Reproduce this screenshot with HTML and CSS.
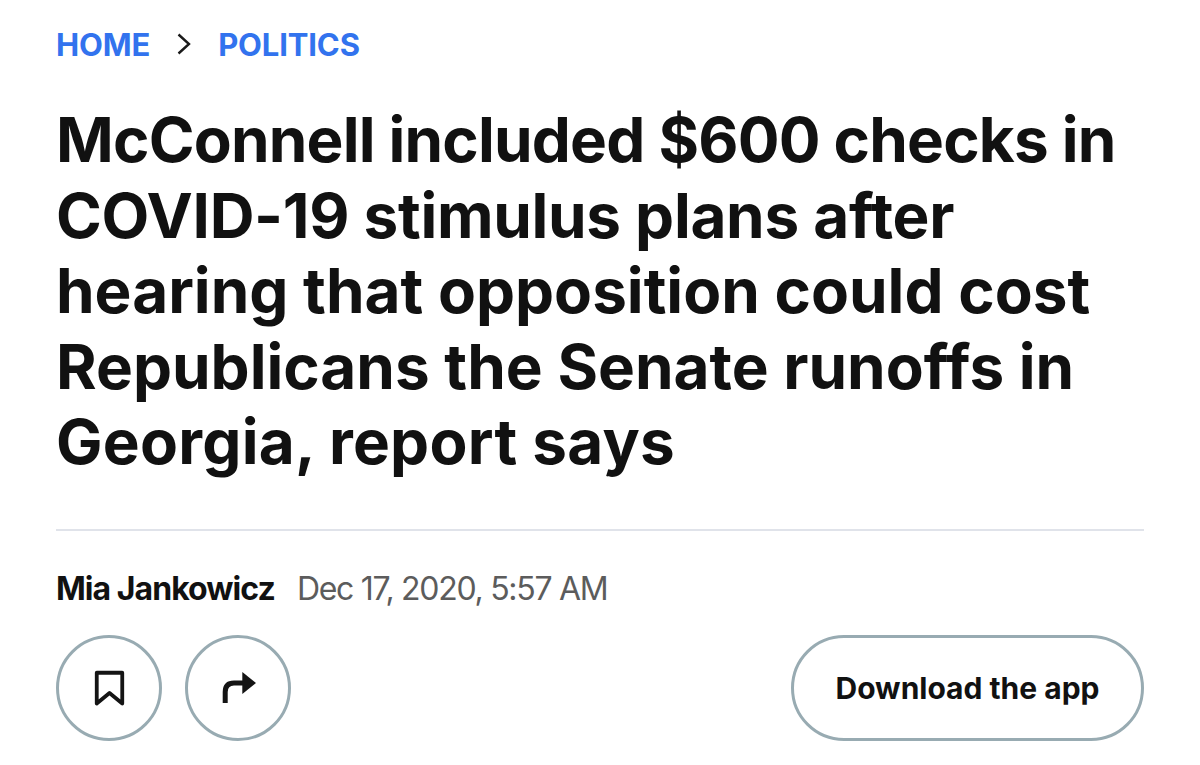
FILE: index.html
```html
<!DOCTYPE html>
<html lang="en">
<head>
<meta charset="utf-8">
<title>Article header</title>
<link rel="stylesheet" href="styles.css">
</head>
<body>
<main class="page">
  <nav class="crumbs">
    <a class="crumb">HOME</a>
    <svg class="chev" viewBox="0 0 14 22" width="14" height="22"><path d="M1.5 1.5 L12 11 L1.5 20.5" fill="none" stroke="#1a1a1a" stroke-width="2.4"/></svg>
    <a class="crumb">POLITICS</a>
  </nav>
  <h1 class="title"><span class="line tight">McConnell included $600 checks in</span> <span class="line snug">COVID-19 stimulus plans after</span> <span class="line">hearing that opposition could cost</span> <span class="line">Republicans the Senate runoffs in</span> <span class="line loose">Georgia, report says</span></h1>
  <hr class="rule">
  <div class="byline"><span class="author">Mia Jankowicz</span><span class="date">Dec 17, 2020, 5:57 AM</span></div>
  <div class="actions">
    <button class="circle"><svg viewBox="0 0 40 40" width="40" height="40"><path d="M7.75 4.75 H33.25 V35.5 L20.5 25 L7.75 35.5 Z" fill="none" stroke="#141414" stroke-width="3.8" stroke-linejoin="round"/></svg></button>
    <button class="circle"><svg viewBox="0 0 40 40" width="40" height="40"><path d="M7.2 35 V24 Q7.2 15 16 15 H26" fill="none" stroke="#141414" stroke-width="5"/><path d="M24.3 4 L38 15 L24.3 26 Z" fill="#141414"/></svg></button>
    <button class="app">Download the app</button>
  </div>
</main>
</body>
</html>
```
FILE: styles.css
```css
html, body { margin: 0; background: #fff; }
body { font-family: Inter, "Liberation Sans", sans-serif; color: #111; }
.page { width: 1088px; height: 765px; box-sizing: border-box; margin-left: 56px; padding-top: 25px; display: flex; flex-direction: column; }
.crumbs { display: flex; align-items: center; gap: 27px; height: 38px; }
.crumb { color: #3273ee; font-size: 31px; font-weight: 700; letter-spacing: -0.15px; }
.title { margin: 39px 0 0; font-size: 62px; line-height: 75.5px; font-weight: 700; width: 1088px; }
.line { display: block; white-space: nowrap; }
.tight { letter-spacing: -0.8px; }
.snug { letter-spacing: -0.3px; }
.loose { letter-spacing: 0.25px; }
.rule { margin: 49px 0 0; border: 0; height: 2px; background: #e0e3ea; }
.byline { margin-top: 38px; display: flex; align-items: baseline; gap: 22px; font-size: 32px; letter-spacing: -1.28px; }
.author { font-weight: 700; letter-spacing: -0.95px; }
.date { color: #5c5c5c; }
.actions { margin-top: 27px; display: flex; align-items: center; gap: 23px; }
.circle { width: 106px; height: 106px; border-radius: 50%; border: 3px solid #98abb2; background: #fff; padding: 0; display: flex; align-items: center; justify-content: center; }
.app { margin-left: auto; width: 353px; height: 106px; border-radius: 53px; border: 3px solid #98abb2; background: #fff; font: 700 30px Inter, sans-serif; color: #111; letter-spacing: 0; }
```
